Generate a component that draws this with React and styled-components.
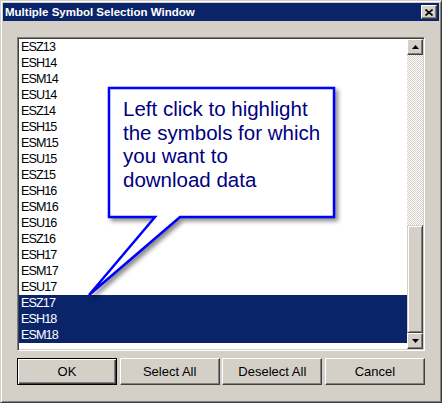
import React from "react";
import styled, { createGlobalStyle, css } from "styled-components";

const Global = createGlobalStyle`
  html, body { margin: 0; padding: 0; background: #D4D0C8; }
  body { width: 442px; height: 403px; overflow: hidden; }
`;

const Dialog = styled.div`
  position: relative;
  box-sizing: border-box;
  width: 442px;
  height: 403px;
  background: #D4D0C8;
  border: 1px solid;
  border-color: #D4D0C8 #404040 #404040 #D4D0C8;
  box-shadow: inset 1px 1px #fff, inset -1px -1px #808080;
  padding: 2px;
  display: flex;
  flex-direction: column;
  font-family: "Liberation Sans", Arial, sans-serif;
`;

const TitleBar = styled.div`
  height: 18px;
  background: #0A246A;
  display: flex;
  align-items: center;
  justify-content: space-between;
  padding: 0 2px 0 2px;
`;

const TitleText = styled.div`
  color: #fff;
  font-weight: bold;
  font-size: 11.5px;
  line-height: 18px;
`;

const raised = css`
  box-sizing: border-box;
  background: #D4D0C8;
  border: 1px solid;
  border-color: #fff #404040 #404040 #fff;
  box-shadow: inset -1px -1px #808080;
`;

const CloseButton = styled.div`
  ${raised};
  width: 16px;
  height: 14px;
  display: flex;
  align-items: center;
  justify-content: center;
`;

const Body = styled.div`
  flex: 1;
  display: flex;
  flex-direction: column;
  padding: 16px 14px 14px 14px;
  gap: 7px;
`;

const ListBox = styled.div`
  box-sizing: border-box;
  height: 314px;
  display: flex;
  background: #fff;
  border: 1px solid;
  border-color: #808080 #fff #fff #808080;
  box-shadow: inset 1px 1px #404040, inset -1px -1px #D4D0C8;
  padding: 1px;
`;

const Rows = styled.div`
  flex: 1;
  overflow: hidden;
`;

const Row = styled.div`
  height: 16px;
  line-height: 16px;
  padding-left: 2px;
  font-size: 12.6px;
  letter-spacing: -0.9px;
  color: ${(p) => (p.$selected ? "#fff" : "#000")};
  background: ${(p) => (p.$selected ? "#0A246A" : "transparent")};
`;

const ScrollBar = styled.div`
  width: 16px;
  display: flex;
  flex-direction: column;
`;

const ScrollButton = styled.div`
  ${raised};
  height: 16px;
  display: flex;
  align-items: center;
  justify-content: center;
`;

const Track = styled.div`
  flex: ${(p) => p.$flex};
  background-color: #D4D0C8;
  background-image: conic-gradient(#fff 25%, #D4D0C8 0 50%, #fff 0 75%, #D4D0C8 0);
  background-size: 2px 2px;
`;

const Thumb = styled.div`
  ${raised};
  height: 108px;
  border-color: #D4D0C8 #404040 #404040 #D4D0C8;
  box-shadow: inset 1px 1px #fff, inset -1px -1px #808080;
`;

const ButtonRow = styled.div`
  display: flex;
  justify-content: space-between;
`;

const Button = styled.div`
  box-sizing: border-box;
  width: 100px;
  height: 27px;
  display: flex;
  align-items: center;
  justify-content: center;
  background: #D4D0C8;
  font-size: 13px;
  color: #000;
  border: 1px solid;
  ${(p) =>
    p.$default
      ? css`
          border-color: #000;
          box-shadow: inset 1px 1px #fff, inset -1px -1px #404040, inset -2px -2px #808080;
        `
      : css`
          border-color: #fff #404040 #404040 #fff;
          box-shadow: inset -1px -1px #808080;
        `}
`;

const Callout = styled.div`
  position: absolute;
  left: 80px;
  top: 80px;
  width: 270px;
  height: 225px;
`;

const CalloutShape = styled.svg`
  position: absolute;
  left: 0;
  top: 0;
  overflow: visible;
  filter: drop-shadow(3px 3px 2px rgba(0, 0, 0, 0.45));
`;

const CalloutText = styled.div`
  position: absolute;
  left: 42px;
  top: 16px;
  font-family: "Liberation Sans", Arial, sans-serif;
  font-size: 20.5px;
  line-height: 23.6px;
  color: #000080;
  white-space: nowrap;
`;

const items = [
  "ESZ13", "ESH14", "ESM14", "ESU14", "ESZ14", "ESH15", "ESM15", "ESU15",
  "ESZ15", "ESH16", "ESM16", "ESU16", "ESZ16", "ESH17", "ESM17", "ESU17",
  "ESZ17", "ESH18", "ESM18",
];
const selected = new Set(["ESZ17", "ESH18", "ESM18"]);

const Arrow = ({ up }) => (
  <svg width="7" height="4" viewBox="0 0 7 4">
    <path d={up ? "M3.5 0 L7 4 L0 4 Z" : "M0 0 L7 0 L3.5 4 Z"} fill="#000" />
  </svg>
);

export default function App() {
  return (
    <>
      <Global />
      <Dialog>
        <TitleBar>
          <TitleText>Multiple Symbol Selection Window</TitleText>
          <CloseButton>
            <svg width="8" height="7" viewBox="0 0 8 7">
              <path d="M0.5 0.5 L7.5 6.5 M7.5 0.5 L0.5 6.5" stroke="#000" strokeWidth="1.6" />
            </svg>
          </CloseButton>
        </TitleBar>
        <Body>
          <ListBox>
            <Rows>
              {items.map((s) => (
                <Row key={s} $selected={selected.has(s)}>{s}</Row>
              ))}
            </Rows>
            <ScrollBar>
              <ScrollButton><Arrow up /></ScrollButton>
              <Track $flex={1} />
              <Thumb />
              <ScrollButton><Arrow /></ScrollButton>
            </ScrollBar>
          </ListBox>
          <ButtonRow>
            <Button $default>OK</Button>
            <Button>Select All</Button>
            <Button>Deselect All</Button>
            <Button>Cancel</Button>
          </ButtonRow>
        </Body>
        <Callout>
          <CalloutShape width="270" height="225" viewBox="0 0 270 225">
            <path
              d="M28 7 H253 V136 H99 L8 214 L74 136 H28 Z"
              fill="#fff"
              stroke="#0000FF"
              strokeWidth="2.5"
              strokeLinejoin="miter"
            />
          </CalloutShape>
          <CalloutText>
            Left click to highlight
            <br />
            the symbols for which
            <br />
            you want to
            <br />
            download data
          </CalloutText>
        </Callout>
      </Dialog>
    </>
  );
}
